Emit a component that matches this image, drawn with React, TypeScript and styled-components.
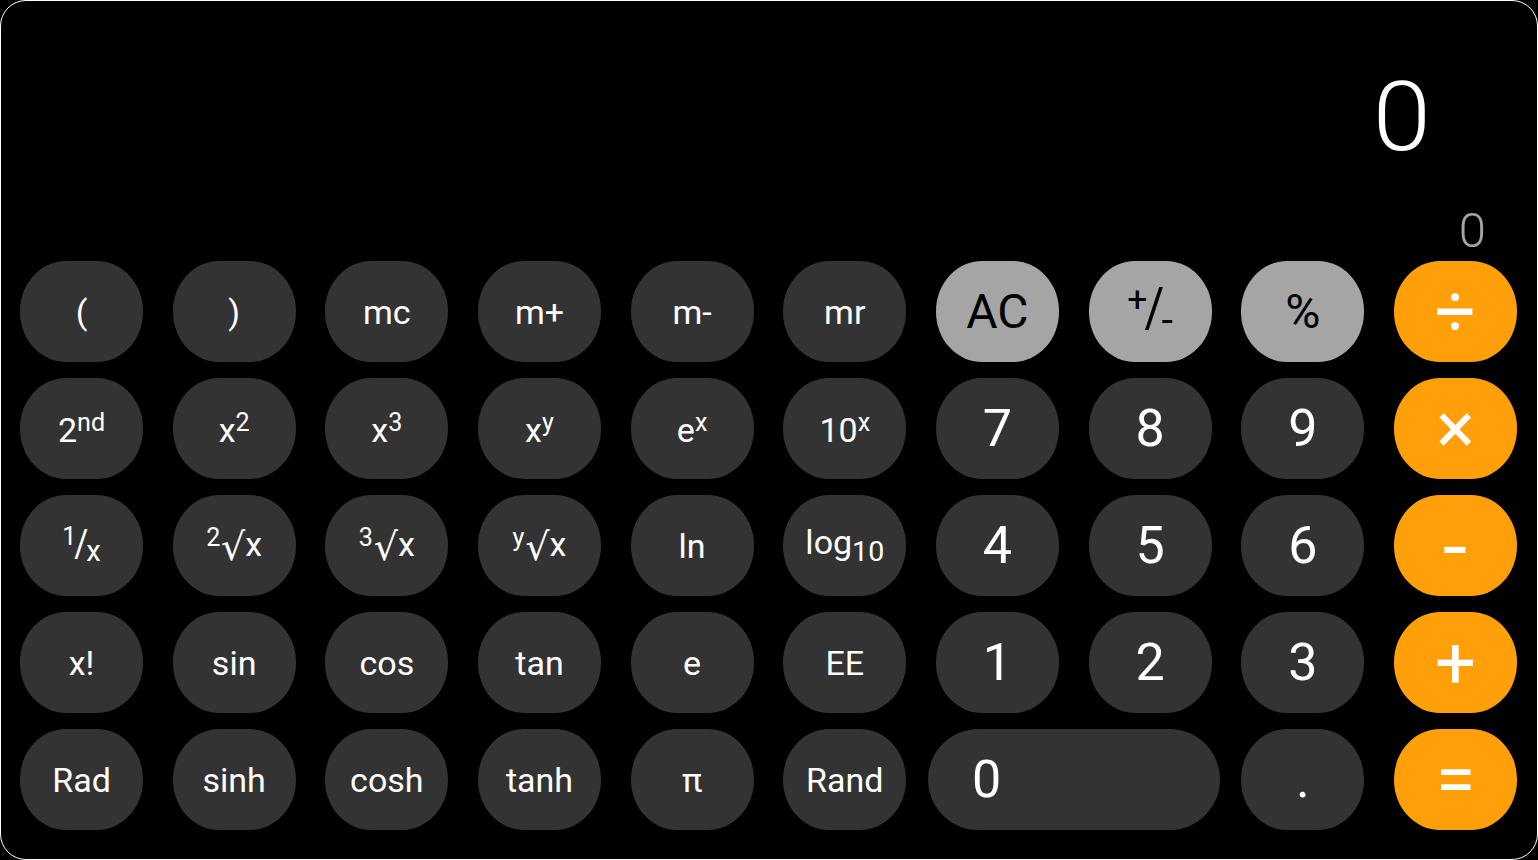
import React from "react";
import styled, { createGlobalStyle, css } from "styled-components";

const Global = createGlobalStyle`
  html, body { margin: 0; padding: 0; background: #000; }
  body { font-family: Roboto, "Liberation Sans", sans-serif; }
  * { box-sizing: border-box; }
`;

const Frame = styled.div`
  width: 1538px;
  height: 860px;
  background: #000;
  border: 1px solid #ffffff;
  border-radius: 26px;
  display: flex;
  flex-direction: column;
  overflow: hidden;
`;

const Display = styled.div`
  display: flex;
  flex-direction: column;
  align-items: flex-end;
  padding-top: 68px;
`;

const MainReadout = styled.div`
  font-size: 97px;
  font-weight: 300;
  line-height: 1;
  height: 96px;
  color: #ffffff;
  padding-right: 98px;
  transform: scaleX(1.08);
  transform-origin: right center;
`;

const SubReadout = styled.div`
  font-size: 49px;
  font-weight: 300;
  line-height: 1;
  height: 49px;
  color: #a5a5a5;
  margin-top: 41px;
  padding-right: 51px;
`;

const Keypad = styled.div`
  display: grid;
  grid-template-columns: repeat(10, 123px);
  grid-auto-rows: 101px;
  column-gap: 29.67px;
  row-gap: 16px;
  margin-top: 6px;
  padding-left: 19px;
`;

type Variant = "fn" | "digit" | "util" | "op";

const variantStyles: Record<Variant, ReturnType<typeof css>> = {
  fn: css`
    background: #333333;
    color: #ffffff;
    font-size: 34px;
  `,
  digit: css`
    background: #333333;
    color: #ffffff;
    font-size: 52px;
  `,
  util: css`
    background: #a5a5a5;
    color: #000000;
    font-size: 48px;
  `,
  op: css`
    background: #ff9f0a;
    color: #ffffff;
    font-size: 72px;
  `,
};

const Key = styled.button<{ $variant: Variant; $wide?: boolean }>`
  border: none;
  outline: none;
  padding: 0;
  margin: 0;
  font-family: Roboto, "Liberation Sans", "DejaVu Sans", sans-serif;
  font-weight: 400;
  line-height: 1;
  border-radius: 46px / 50px;
  display: flex;
  align-items: center;
  justify-content: center;
  white-space: nowrap;
  cursor: pointer;
  ${(p) => variantStyles[p.$variant]}
  ${(p) =>
    p.$wide &&
    css`
      grid-column: span 2;
      margin: 0 -8px;
      justify-content: flex-start;
      padding-left: 44px;
      border-radius: 51px;
    `}
`;

const Label = styled.span`
  display: inline-block;
  line-height: 1;
`;

const Sup = styled.span`
  font-size: 0.74em;
  vertical-align: 0.42em;
`;

const Sub = styled.span`
  font-size: 0.84em;
  vertical-align: -0.24em;
`;

const FracTop = styled.span`
  font-size: 0.74em;
  vertical-align: 0.4em;
`;

const FracBottom = styled.span`
  font-size: 0.86em;
  vertical-align: -0.22em;
`;

const Slash = styled.span`
  display: inline-block;
  margin: 0 -0.06em;
  transform: scaleY(1.15);
`;

const Root = styled.span`
  font-family: "DejaVu Sans", sans-serif;
  font-size: 1.12em;
  margin-left: 0.02em;
  vertical-align: -0.1em;
`;

const OpMinus = styled.span`
  font-size: 0.9em;
  font-weight: 500;
  transform: scaleX(1.25);
  display: inline-block;
`;

type KeyDef = { label: React.ReactNode; v: Variant; wide?: boolean };

const keys: KeyDef[] = [
  { label: "(", v: "fn" },
  { label: ")", v: "fn" },
  { label: "mc", v: "fn" },
  { label: "m+", v: "fn" },
  { label: "m-", v: "fn" },
  { label: "mr", v: "fn" },
  { label: "AC", v: "util" },
  {
    label: (
      <>
        <FracTop>+</FracTop>
        <Slash>/</Slash>
        <FracBottom>-</FracBottom>
      </>
    ),
    v: "util",
  },
  { label: "%", v: "util" },
  { label: "÷", v: "op" },

  { label: <>2<Sup>nd</Sup></>, v: "fn" },
  { label: <>x<Sup>2</Sup></>, v: "fn" },
  { label: <>x<Sup>3</Sup></>, v: "fn" },
  { label: <>x<Sup>y</Sup></>, v: "fn" },
  { label: <>e<Sup>x</Sup></>, v: "fn" },
  { label: <>10<Sup>x</Sup></>, v: "fn" },
  { label: "7", v: "digit" },
  { label: "8", v: "digit" },
  { label: "9", v: "digit" },
  { label: "×", v: "op" },

  {
    label: (
      <>
        <FracTop>1</FracTop>
        <Slash>/</Slash>
        <FracBottom>x</FracBottom>
      </>
    ),
    v: "fn",
  },
  { label: <><FracTop>2</FracTop><Root>√</Root>x</>, v: "fn" },
  { label: <><FracTop>3</FracTop><Root>√</Root>x</>, v: "fn" },
  { label: <><FracTop>y</FracTop><Root>√</Root>x</>, v: "fn" },
  { label: "ln", v: "fn" },
  { label: <>log<Sub>10</Sub></>, v: "fn" },
  { label: "4", v: "digit" },
  { label: "5", v: "digit" },
  { label: "6", v: "digit" },
  { label: <OpMinus>-</OpMinus>, v: "op" },

  { label: "x!", v: "fn" },
  { label: "sin", v: "fn" },
  { label: "cos", v: "fn" },
  { label: "tan", v: "fn" },
  { label: "e", v: "fn" },
  { label: "EE", v: "fn" },
  { label: "1", v: "digit" },
  { label: "2", v: "digit" },
  { label: "3", v: "digit" },
  { label: "+", v: "op" },

  { label: "Rad", v: "fn" },
  { label: "sinh", v: "fn" },
  { label: "cosh", v: "fn" },
  { label: "tanh", v: "fn" },
  { label: "π", v: "fn" },
  { label: "Rand", v: "fn" },
  { label: "0", v: "digit", wide: true },
  { label: ".", v: "digit" },
  { label: "=", v: "op" },
];

export default function App() {
  return (
    <>
      <Global />
      <Frame>
        <Display>
          <MainReadout>0</MainReadout>
          <SubReadout>0</SubReadout>
        </Display>
        <Keypad>
          {keys.map((k, i) => (
            <Key key={i} $variant={k.v} $wide={k.wide}>
              <Label>{k.label}</Label>
            </Key>
          ))}
        </Keypad>
      </Frame>
    </>
  );
}
